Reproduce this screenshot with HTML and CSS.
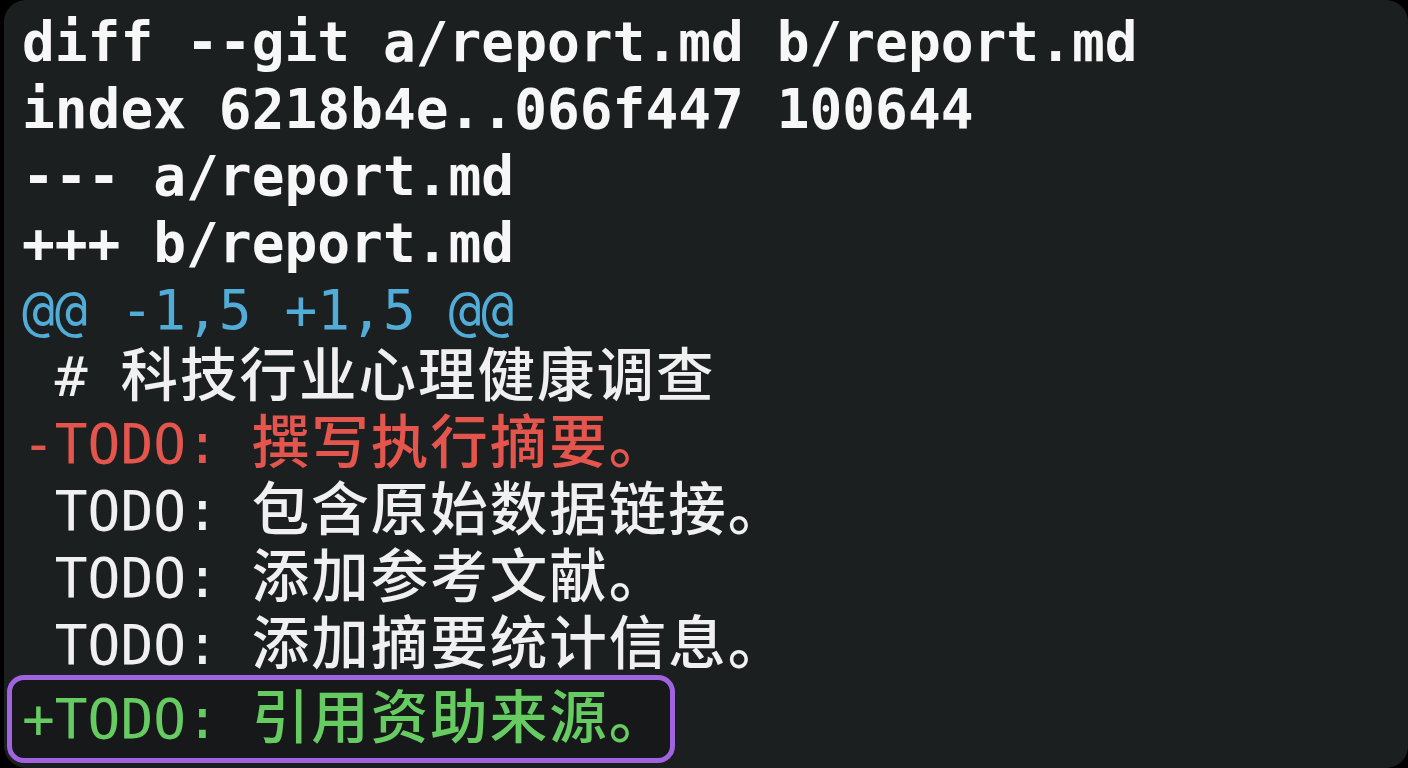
FILE: index.html
```html
<!DOCTYPE html>
<html lang="zh-CN">
<head>
<meta charset="utf-8">
<title>git diff</title>
<link rel="stylesheet" href="styles.css">
</head>
<body>
<main class="terminal">
  <div class="line meta">diff --git a/report.md b/report.md</div>
  <div class="line meta">index 6218b4e..066f447 100644</div>
  <div class="line meta">--- a/report.md</div>
  <div class="line meta">+++ b/report.md</div>
  <div class="line hunk">@@ -1,5 +1,5 @@</div>
  <div class="line ctx"> # <span class="cjk">科技行业心理健康调查</span></div>
  <div class="line del">-TODO: <span class="cjk">撰写执行摘要。</span></div>
  <div class="line ctx"> TODO: <span class="cjk">包含原始数据链接。</span></div>
  <div class="line ctx"> TODO: <span class="cjk">添加参考文献。</span></div>
  <div class="line ctx"> TODO: <span class="cjk">添加摘要统计信息。</span></div>
  <div class="line add highlight">+TODO: <span class="cjk">引用资助来源。</span></div>
</main>
</body>
</html>
```

FILE: styles.css
```css
html, body {
  margin: 0;
  padding: 0;
  background: #000;
}

body {
  width: 1408px;
  height: 768px;
  overflow: hidden;
}

.terminal {
  box-sizing: border-box;
  margin-left: 4px;
  width: 1404px;
  height: 768px;
  border-radius: 22px;
  background: #1c1f20;
  padding: 9px 0 0 18px;
  font-family: "DejaVu Sans Mono", "Noto Sans CJK SC", monospace;
  font-size: 54.5px;
  color: #f1f1f1;
}

.line {
  height: 67px;
  line-height: 67px;
  white-space: pre;
}

.cjk {
  font-family: "DejaVu Sans Mono", "Noto Sans CJK SC", sans-serif;
  font-size: 57.5px;
  font-weight: 500;
  letter-spacing: 2px;
  line-height: 0;
}

.meta {
  font-weight: bold;
  color: #f7f7f7;
}

.hunk {
  color: #52acd8;
}

.ctx {
  color: #f0f0f0;
}

.del {
  color: #e4554d;
}

.add {
  color: #66cc62;
}

.highlight {
  width: fit-content;
  height: 72px;
  margin: -4px 0 0 -15px;
  padding: 3px 2px 3px 10px;
  border: 5px solid #a064e0;
  border-radius: 17px;
  background: #16181a;
  line-height: 72px;
}
```
